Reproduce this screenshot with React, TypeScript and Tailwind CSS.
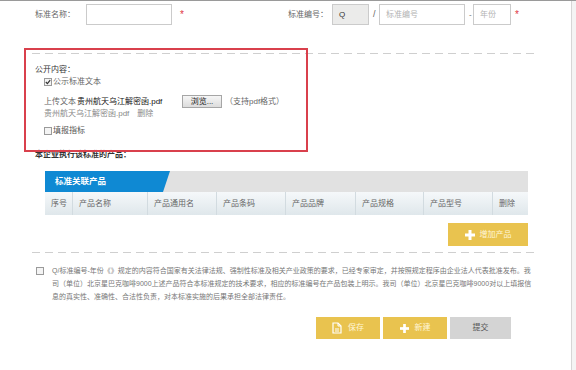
import React from "react";

// dashed separator, longer dashes than border-dashed gives
function Dashed({className}: {className?: string}) {
  return (
    <div
      className={
        "h-px bg-[linear-gradient(to_right,#cfcfcf_0_8px,transparent_8px_13px)] bg-[length:13px_1px] bg-repeat-x " +
        (className || "")
      }
    />
  );
}

function Check({checked}: {checked?: boolean}) {
  return (
    <span className="flex h-[8px] w-[8px] shrink-0 items-center justify-center border border-[#9a9a9a] bg-[#f4f4f4]">
      {checked && (
        <svg width="6" height="6" viewBox="0 0 6 6">
          <path d="M0.8 3 L2.4 4.6 L5.2 1.2" stroke="#333" strokeWidth="1.2" fill="none" />
        </svg>
      )}
    </span>
  );
}

function Plus({size}: {size: number}) {
  return (
    <svg width={size} height={size} viewBox="0 0 10 10">
      <rect x="3.5" y="0" width="3" height="10" fill="#fff" />
      <rect x="0" y="3.5" width="10" height="3" fill="#fff" />
    </svg>
  );
}

function SaveIcon() {
  return (
    <svg width="10" height="12" viewBox="0 0 10 12">
      <path d="M1 1 H6 L9 4 V11 H1 Z" fill="none" stroke="#fff" strokeWidth="1.2" />
      <path d="M6 1 V4 H9" fill="none" stroke="#fff" strokeWidth="1" />
      <path d="M3 7 H7 M3 9 H7" stroke="#fff" strokeWidth="1" />
    </svg>
  );
}

const cols = [
  {name: "序号", w: "w-[28px]"},
  {name: "产品名称", w: "w-[75px]"},
  {name: "产品通用名", w: "w-[69px]"},
  {name: "产品条码", w: "w-[69px]"},
  {name: "产品品牌", w: "w-[70px]"},
  {name: "产品规格", w: "w-[68px]"},
  {name: "产品型号", w: "w-[69px]"},
  {name: "删除", w: "w-[35px]"},
];

export default function App() {
  return (
    <div className="relative flex h-[370px] w-[576px] overflow-hidden border-t border-[#9a9a9a] bg-white font-['Liberation_Sans','Noto_Sans_CJK_SC',sans-serif] text-[8px] text-[#666]">
      <div className="flex w-[572px] flex-col border-r border-[#d6d6d6]">
        {/* top row */}
        <div className="mt-[3px] flex h-[21px] items-center">
          <span className="ml-[35px] w-[51px]">标准名称：</span>
          <div className="h-[21px] w-[86px] border border-[#cbcbcb] bg-white" />
          <span className="ml-[8px] text-[10px] text-[#e0353f]">*</span>
          <span className="ml-[104px] w-[44px]">标准编号：</span>
          <div className="flex h-[21px] w-[37px] items-center border border-[#cbcbcb] bg-[#ebebea] pl-[6px] text-[8px] text-[#333]">
            Q
          </div>
          <span className="ml-[4px] w-[6px] text-[9px]">/</span>
          <div className="flex h-[21px] w-[86px] items-center border border-[#cbcbcb] pl-[6px] text-[#b3b3b3]">
            标准编号
          </div>
          <span className="ml-[4px] w-[4px]">-</span>
          <div className="flex h-[21px] w-[38px] items-center border border-[#cbcbcb] pl-[6px] text-[#b3b3b3]">
            年份
          </div>
          <span className="ml-[4px] text-[10px] text-[#e0353f]">*</span>
        </div>

        <Dashed className="ml-[32px] mt-[28px] w-[506px]" />

        <div className="ml-[35px] mt-[10px] h-[12px] leading-[12px] text-[#333]">公开内容：</div>
        <div className="ml-[44px] flex h-[12px] items-center gap-[1px]">
          <Check checked />
          <span>公示标准文本</span>
        </div>
        <div className="ml-[44px] mt-[7px] flex h-[13px] items-center">
          <span className="w-[32px]">上传文本</span>
          <div className="flex h-[13px] w-[106px] items-center bg-white pl-[1px] text-[#111]">贵州航天乌江解密函.pdf</div>
          <div className="flex h-[13px] w-[40px] items-center justify-center border border-[#a6a6a6] bg-[linear-gradient(#f6f6f6,#dcdcdc)] text-[#222]">
            浏览...
          </div>
          <span className="ml-[3px]">（支持pdf格式）</span>
        </div>
        <div className="ml-[44px] flex h-[12px] items-center gap-[8px] text-[#888]">
          <span>贵州航天乌江解密函.pdf</span>
          <span>删除</span>
        </div>
        <div className="ml-[44px] mt-[5px] flex h-[12px] items-center gap-[1px]">
          <Check />
          <span className="text-[#555]">填报指标</span>
        </div>

        <div className="ml-[35px] mt-[12px] h-[12px] leading-[12px] font-bold text-[#333]">本企业执行该标准的产品：</div>

        {/* table */}
        <div className="ml-[45px] mt-[10px] w-[483px]">
          <div className="h-[21px] bg-[#e1e1e1]">
            <div className="flex h-[21px] w-[125px] items-center bg-[#0f89d3] pl-[10px] text-[8.5px] font-bold text-white [clip-path:polygon(0_0,100%_0,calc(100%-7px)_100%,0_100%)]">
              标准关联产品
            </div>
          </div>
          <div className="flex h-[23px] bg-[linear-gradient(#f5f8fa,#dfe7eb)]">
            {cols.map((c, i) => (
              <div
                key={c.name}
                className={
                  c.w +
                  " flex items-center pl-[6px] text-[#666] " +
                  (i < cols.length - 1 ? "border-r border-[#d2dbe0]" : "")
                }
              >
                {c.name}
              </div>
            ))}
          </div>
        </div>

        <div className="ml-[448px] mt-[8px] flex h-[23px] w-[80px] items-center justify-center gap-[5px] bg-[#e9c34f] text-[#fff6d8]">
          <Plus size={10} />
          <span>增加产品</span>
        </div>

        <Dashed className="ml-[32px] mt-[6px] w-[506px]" />

        {/* declaration */}
        <div className="mt-[11px] flex">
          <div className="ml-[36px] mt-[3px]">
            <Check />
          </div>
          <p className="ml-[8px] whitespace-nowrap text-[7px] leading-[13px] text-[#777]">
            Q/标准编号-年份《》规定的内容符合国家有关法律法规、强制性标准及相关产业政策的要求，已经专家审定，并按照规定程序由企业法人代表批准发布。我
            <br />
            司（单位）北京星巴克咖啡9000上述产品符合本标准规定的技术要求，相应的标准编号在产品包装上明示。我司（单位）北京星巴克咖啡9000对以上填报信
            <br />
            息的真实性、准确性、合法性负责，对本标准实施的后果承担全部法律责任。
          </p>
        </div>

        {/* buttons */}
        <div className="ml-[316px] mt-[14px] flex h-[22px] gap-[3px]">
          <div className="flex w-[64px] items-center justify-center gap-[6px] bg-[#e9c34f] text-[#fff6d8]">
            <SaveIcon />
            <span>保存</span>
          </div>
          <div className="flex w-[64px] items-center justify-center gap-[6px] bg-[#e9c34f] text-[#fff6d8]">
            <Plus size={9} />
            <span>新建</span>
          </div>
          <div className="flex w-[61px] items-center justify-center bg-[#d4d4d4] text-[#555]">提交</div>
        </div>
      </div>
      <div className="flex-1 bg-[#f4f4f4]" />

      {/* red annotation frame */}
      <div className="absolute left-[24px] top-[47px] h-[104px] w-[284px] border-2 border-[#d9404c]" />
    </div>
  );
}
